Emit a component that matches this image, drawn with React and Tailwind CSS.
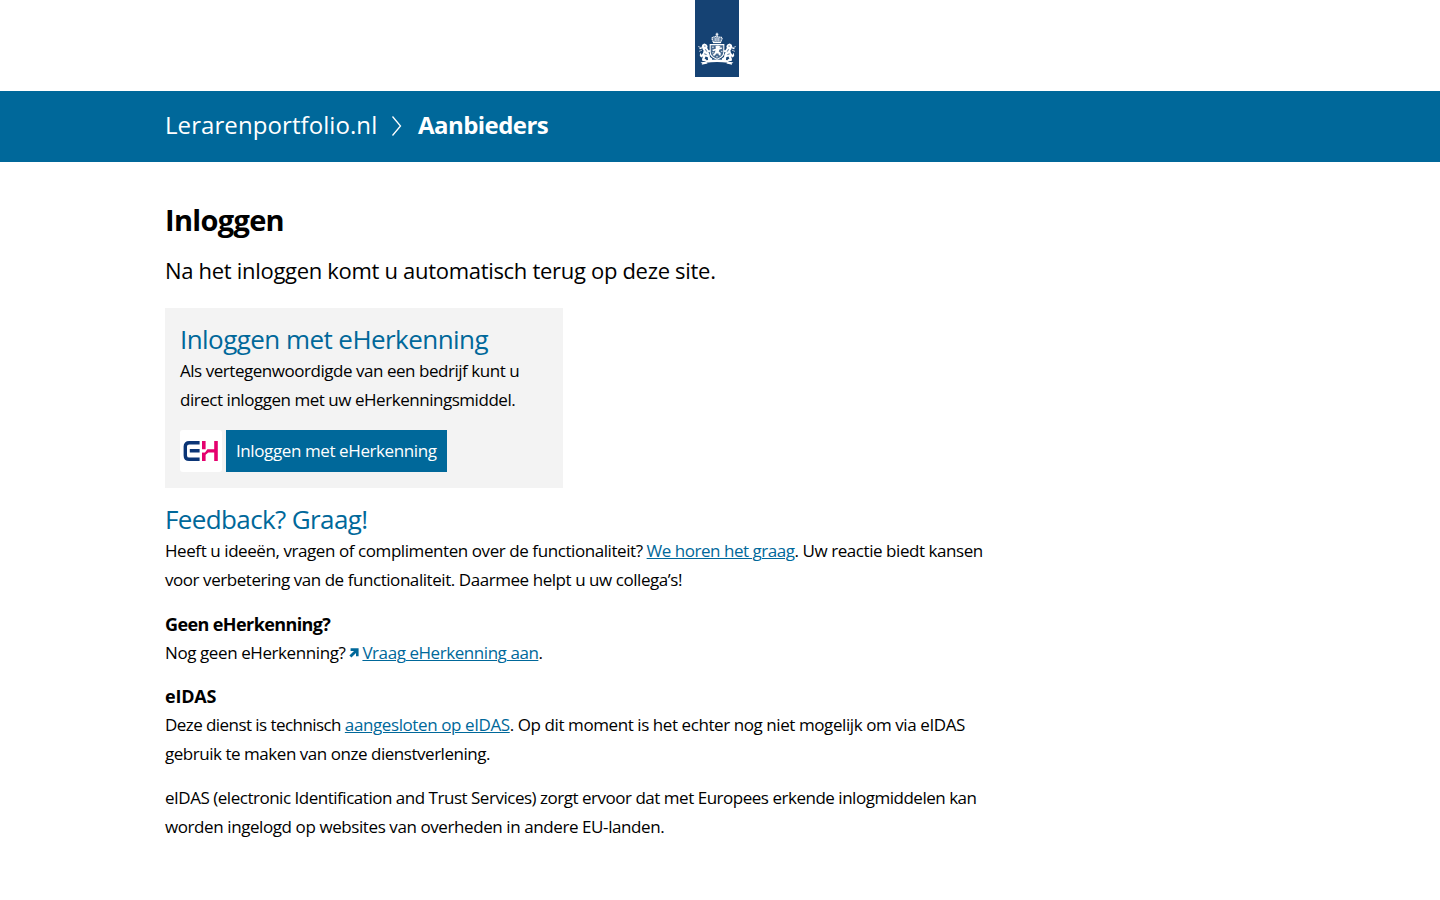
const LION = "M4.2 12.8 6.2 11.6 8.3 12.3 9.6 14 9.2 16 10.6 18.2 13 18.2 13.3 19.6 10.4 20.2 11.6 22.4 12 25 14.2 26.6 14 28 10 28 9.8 25.2 7.6 24.4 6.6 26.4 8.4 27.8 8 29 4.4 29 4 27.2 5 24.2 3.4 25.4 1.8 24 2 21.6 3 21.2 3.2 23 5 21 5.6 18.6 4.2 16.8 1.8 17.2 1.2 15.8 3.6 15.2Z";

function Lion() {
  return (
    <>
      <path d={LION} fill="#fff" />
      <path d="M0 14.5 2.4 15.2M1 19.4 4 18.2M6 14.2h1.6M7 17.4 9 20.6M7.4 21.6 9.6 23" stroke="#e8edf3" strokeWidth=".7" fill="none" />
      <path d="M6.2 14.1h1.3M7.4 17.2 8.8 19.6M6.2 21.8 8.6 22.6M3.4 16.2 4.6 16.4" stroke="#154273" strokeWidth=".7" fill="none" />
    </>
  );
}

function CoatOfArms() {
  return (
    <svg className="block" width="44" height="77" viewBox="0 0 44 77" aria-label="Rijksoverheid">
      <rect width="44" height="77" fill="#154273" />
      <g transform="translate(3 32)">
        <Lion />
        <g transform="translate(38 0) scale(-1 1)"><Lion /></g>
        <path d="M19 .8v3.4M17.6 2.2h2.8" stroke="#fff" strokeWidth="1.1" />
        <path d="M13.8 6.4Q14.8 4.4 17 5.2 19 2.8 21 5.2 23.2 4.4 24.2 6.4L22.6 10.4H15.4Z" fill="#5c7b9f" stroke="#fff" strokeWidth="1.1" strokeDasharray="1.5 .5" />
        <path d="M17.2 6v3M19 5v4M20.8 6v3" stroke="#fff" strokeWidth=".8" />
        <path d="M15 10.5h8" stroke="#fff" strokeWidth="1.3" />
        <path d="M12.2 12.6h13.6v7.6q0 4.6-6.8 7-6.8-2.4-6.8-7Z" fill="#47698f" stroke="#fff" strokeWidth="1.1" />
        <path d="M17.6 14 20 13.6 22.6 14.4 21.4 15.6 23.8 15.4 24 16.8 21.4 17.4 20.8 19.6 22.8 21 22.4 23.8 20.8 23 20.4 21.6 18.4 21.4 16.6 23.8 14.4 23.2 16.4 21.2 17.6 18.6 15 19.2 14.2 17.8 17.8 16.8Z" fill="#fff" />
        <path d="M14 15.2h1.8M14.2 20.8h1.4M23.2 19.4h1.2M18.2 24.8h1.6" stroke="#fff" strokeWidth=".9" />
        <path d="M7.6 28.2Q19 26.6 30.4 28.2V30.8Q19 29.4 7.6 30.8Z" fill="#fff" />
        <path d="M7.8 29.6 2.6 30.4 4.4 31.8 3.6 32.8 9.6 31.4M30.2 29.6 35.4 30.4 33.6 31.8 34.4 32.8 28.4 31.4" fill="#fff" />
      </g>
    </svg>
  );
}

function EHLogo() {
  return (
    <svg className="block" width="42" height="42" viewBox="0 0 42 42">
      <rect width="42" height="42" rx="3" fill="#fff" />
      <path d="M19.6 12.7H9.2Q5.3 12.7 5.3 16.6V25.4Q5.3 29.3 9.2 29.3H19.6M9.8 20.7H19.6" fill="none" stroke="#0b3576" strokeWidth="3.4" />
      <path d="M23.8 11V19.2M23.8 22.8V31M36 11V31" stroke="#e5006e" strokeWidth="3.6" />
      <path d="M22 22.8H24.8L27.4 19.2H35V22.4H28.4L25.6 24.8H22Z" fill="#e5006e" />
    </svg>
  );
}

function Line({ className = "", children }) {
  return <span className={"block w-max whitespace-nowrap " + className}>{children}</span>;
}

function Link({ className = "", children }) {
  return <a href="#" className={"text-[#00689a] underline decoration-1 underline-offset-1 " + className}>{children}</a>;
}

export default function App() {
  return (
    <div className="min-h-screen bg-white font-['Open_Sans','Noto_Sans',sans-serif] text-[17px] leading-[29px] text-black">
      <header className="flex h-[91px] items-start pl-[695px]">
        <CoatOfArms />
      </header>
      <nav className="flex h-[71px] items-center bg-[#00689a] pb-[3px] pl-[165px] text-2xl text-white">
        <div className="w-[213px]"><Line className="tracking-[0.08px]">Lerarenportfolio.nl</Line></div>
        <svg className="ml-[13px] mr-[16px] mt-[2px] block" width="11" height="22" viewBox="0 0 11 22"><path d="M1.5 1.5 9.5 11 1.5 20.5" fill="none" stroke="#fff" strokeWidth="1.3" /></svg>
        <Line className="font-bold tracking-[-0.55px]">Aanbieders</Line>
      </nav>
      <main className="pl-[165px] pt-[37px]">
        <h1 className="h-[42px] text-[29px] font-bold leading-[42px]"><Line className="tracking-[-0.68px]">Inloggen</Line></h1>
        <p className="mt-[11px] h-[36px] text-[22px] leading-[36px]"><Line className="tracking-[-0.305px]">Na het inloggen komt u automatisch terug op deze site.</Line></p>
        <section className="mt-[20px] h-[180px] w-[398px] bg-[#f3f3f3] px-[15px] pt-[16px]">
          <h2 className="text-[26px] leading-[31px] text-[#00689a]"><Line className="tracking-[-0.56px]">Inloggen met eHerkenning</Line></h2>
          <p className="mt-px">
            <Line className="tracking-[-0.465px]">Als vertegenwoordigde van een bedrijf kunt u</Line>
            <Line className="tracking-[-0.465px]">direct inloggen met uw eHerkenningsmiddel.</Line>
          </p>
          <div className="mt-[16px] flex gap-1">
            <EHLogo />
            <button className="h-[42px] w-[221px] bg-[#00689a] px-[10px] pb-[2px] text-left text-white"><Line className="tracking-[-0.4px]">Inloggen met eHerkenning</Line></button>
          </div>
        </section>
        <h2 className="mt-[16px] text-[26px] leading-[31px] text-[#00689a]"><Line className="tracking-[-0.62px]">Feedback? Graag!</Line></h2>
        <p className="mt-px">
          <Line className="tracking-[-0.425px]">Heeft u ideeën, vragen of complimenten over de functionaliteit? <Link className="tracking-[-0.47px]">We horen het graag</Link><span className="tracking-[-0.44px]">. Uw reactie biedt kansen</span></Line>
          <Line className="tracking-[-0.442px]">voor verbetering van de functionaliteit. Daarmee helpt u uw collega’s!</Line>
        </p>
        <h3 className="mt-[16px] text-lg font-bold leading-[29px]"><Line className="tracking-[-0.6px]">Geen eHerkenning?</Line></h3>
        <p className="-mt-px">
          <Line className="tracking-[-0.41px]">
            Nog geen eHerkenning? <svg className="mr-[3px] inline-block align-[1px]" width="10" height="10" viewBox="0 0 10 10"><path d="M1.6 .3H9.6V8.2H7V5L2.4 9.6 .4 7.6 5 3H1.6Z" fill="#00689a" /></svg><Link className="tracking-[-0.44px]">Vraag eHerkenning aan</Link>.
          </Line>
        </p>
        <h3 className="mt-[15px] text-lg font-bold leading-[29px]"><Line className="tracking-[-0.2px]">eIDAS</Line></h3>
        <p className="-mt-px">
          <Line className="tracking-[-0.42px]"><span className="tracking-[-0.56px]">Deze dienst is technisch </span><Link className="tracking-[-0.4px]">aangesloten op eIDAS</Link>. Op dit moment is het echter nog niet mogelijk om via eIDAS</Line>
          <Line className="tracking-[-0.465px]">gebruik te maken van onze dienstverlening.</Line>
        </p>
        <p className="mt-[15px]">
          <Line className="tracking-[-0.48px]">eIDAS (electronic Identification and Trust Services) zorgt ervoor dat met Europees erkende inlogmiddelen kan</Line>
          <Line className="tracking-[-0.412px]">worden ingelogd op websites van overheden in andere EU-landen.</Line>
        </p>
      </main>
    </div>
  );
}
